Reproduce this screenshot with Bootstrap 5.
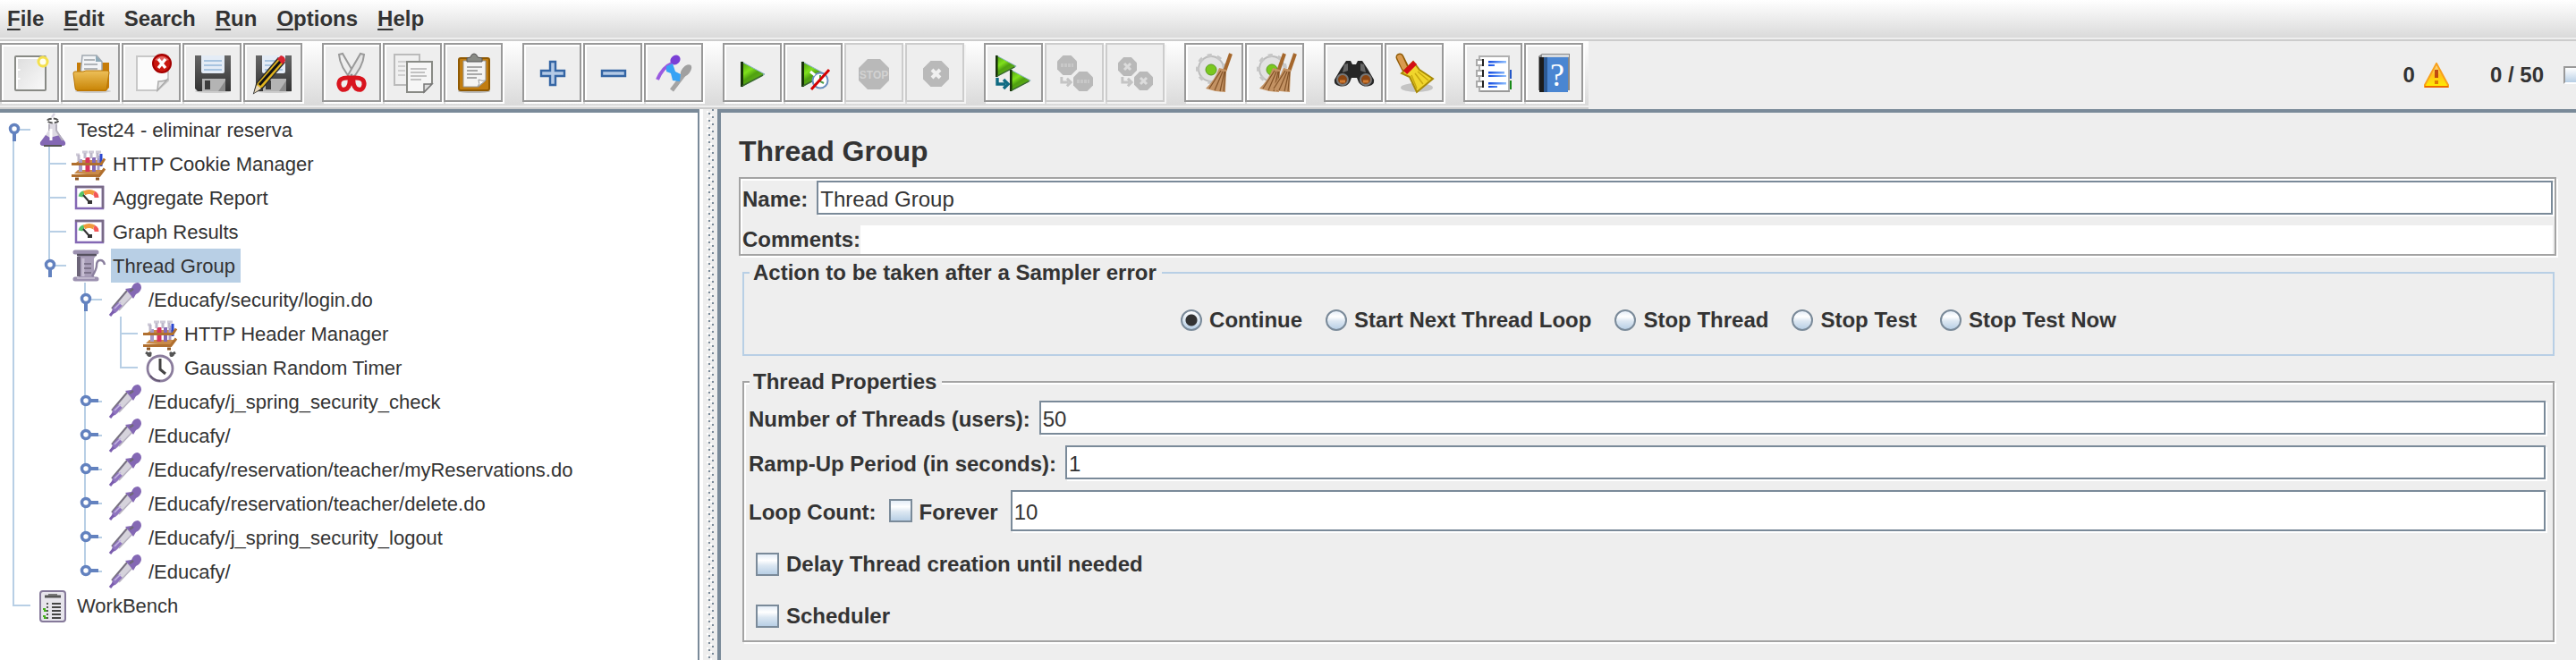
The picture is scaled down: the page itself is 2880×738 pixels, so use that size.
<!DOCTYPE html>
<html lang="en">
<head>
<meta charset="utf-8">
<meta name="viewport" content="width=device-width, initial-scale=1">
<title>Thread Group</title>
<link href="https://cdn.jsdelivr.net/npm/bootstrap@5.3.0/dist/css/bootstrap.min.css" rel="stylesheet">
<style>
  :root { --slate: #7a8a99; --line: #b8cfe5; --panel: #eeeeee; --ink: #333333; --etch: #a3a3a3; }
  body { background: var(--panel); color: var(--ink); font-family: "Liberation Sans", Arial, sans-serif; font-size: 24px; line-height: 30px; font-weight: 700; }
  .menu-strip { background: linear-gradient(#fff, #dadada 42px, #eee 42px); border-bottom: 2px solid #ccc; height: 46px; gap: 22px; padding: 0 8px 2px; }
  .menu-strip a { color: var(--ink); text-decoration: none; line-height: 42px; }
  .menu-strip u { text-decoration-thickness: 2px; text-underline-offset: 3px; }
  .tool-strip { background: linear-gradient(#fff, #dadada 72px, #eee 72px); border-bottom: 2px solid #ccc; height: 76px; padding: 2px 6px 0 0; gap: 22px; }
  .tool-set { gap: 2px; }
  .tool { width: 66px; height: 66px; padding: 0; border: 2px solid #999; border-radius: 0; background: var(--panel); box-shadow: inset 2px 2px #fff, 2px 2px #fff; }
  .tool:disabled { border-color: #ccc; box-shadow: 2px 2px #f4f4f4; }
  .tool svg { display: block; width: 62px; height: 62px; }
  .status { gap: 10px; }
  .threads { margin-left: 36px; }
  .lamp { width: 14px; height: 20px; margin-left: 12px; border: 2px solid #999; border-right: 0; border-bottom-color: #fff; background: linear-gradient(#fff, #b8cfe5); }
  .tree-pane { width: 782px; background: #fff; border-top: 4px solid var(--slate); border-right: 2px solid var(--slate); }
  .splitter { width: 20px; border-left: 4px solid #fff;
    background: linear-gradient(#fff 2px, transparent 2px) 4px 2px / 2px 8px repeat-y,
      linear-gradient(var(--slate) 2px, transparent 2px) 6px 4px / 2px 8px repeat-y,
      linear-gradient(#fff 2px, transparent 2px) 8px 6px / 2px 8px repeat-y,
      linear-gradient(var(--slate) 2px, transparent 2px) 10px 8px / 2px 8px repeat-y; }
  .main-pane { min-width: 0; border-top: 4px solid var(--slate); border-left: 4px solid var(--slate); padding: 23px 22px 20px 20px; }

  .tree, .tree ul { list-style: none; margin: 0; padding: 0; }
  .tree { font-size: 22px; font-weight: 400; }
  .tree ul { padding-left: 40px; }
  .tree li { background: linear-gradient(var(--line), var(--line)) 14px 0 / 2px 100% no-repeat; }
  .tree li:last-child { background-size: 2px 20px; }
  .tree > li:first-child { background-position: 14px 18px; }
  .node { height: 38px; background: linear-gradient(var(--line), var(--line)) 14px 18px / 20px 2px no-repeat; }
  .node svg { flex: none; width: 40px; height: 38px; }
  .node.leaf { padding-left: 40px; }
  .node span { margin-left: 4px; padding: 2px 6px 0 2px; line-height: 36px; white-space: nowrap; }
  .node .picked { background: var(--line); }

  .pane-title { font-size: 32px; line-height: 40px; font-weight: 700; margin-bottom: 9px; }
  .etched { border: 2px solid var(--etch); box-shadow: inset 2px 2px #fff, 2px 2px #fff; }
  .ident { padding: 2px 2px 0; }
  .line-row { gap: 10px; }
  .line-row label { padding-top: 4px; }
  .field { flex: 1 1 0; min-width: 0; height: 38px; padding: 4px 2px 0; border: 2px solid var(--slate); border-radius: 0; background: #fff; color: var(--ink); font-size: 24px; line-height: 30px; box-shadow: 2px 2px #fff; outline: 0; }
  .field.bare { height: 32px; border: 0; box-shadow: none; }
  .field.tall { height: 46px; }
  .boxed { margin: 0 2px 0 4px; padding: 0; border: 2px solid var(--line); }
  .boxed legend { float: none; width: auto; margin: 0 0 0 6px; padding: 0 6px 0 4px; font-size: 24px; line-height: 30px; background: var(--panel); }
  .boxed.etched { border-color: var(--etch); margin-top: 14px; }
  .choices { height: 76px; gap: 26px; }
  .choice { gap: 8px; }
  .choice input { appearance: none; flex: none; width: 26px; height: 26px; margin: 0; border: 2px solid var(--slate); background: linear-gradient(#e4edf7, #fff 30%, #dce7f2 55%, #b8cfe5); }
  .choice input[type=radio] { width: 24px; height: 24px; border-radius: 50%; }
  .choice input[type=radio]:checked { background: radial-gradient(circle, #333 6px, transparent 7px), linear-gradient(#fff, #b8cfe5); }
  .props { padding: 6px 8px 12px 5px; }
  .extras { gap: 28px; margin-top: 22px; }
</style>
</head>
<body class="d-flex flex-column min-vh-100">

<svg class="position-absolute" width="0" height="0" aria-hidden="true">
  <defs>
    <linearGradient id="gGreen" x1="0" y1="0" x2="0.6" y2="1"><stop offset="0" stop-color="#4a9a10"/><stop offset=".4" stop-color="#7fe01c"/><stop offset=".6" stop-color="#4fa010"/><stop offset="1" stop-color="#68b81c"/></linearGradient>
    <linearGradient id="gFolder" x1="0" y1="0" x2="0" y2="1"><stop offset="0" stop-color="#edc05a"/><stop offset="1" stop-color="#c98506"/></linearGradient>
    <linearGradient id="gPage" x1="0" y1="0" x2="1" y2="1"><stop offset="0" stop-color="#dcdcdc"/><stop offset="1" stop-color="#fafafa"/></linearGradient>
    <linearGradient id="gDisk" x1="0" y1="0" x2="0" y2="1"><stop offset="0" stop-color="#666"/><stop offset="1" stop-color="#333"/></linearGradient>
    <linearGradient id="gWarn" x1="0" y1="0" x2="0" y2="1"><stop offset="0" stop-color="#fbd9a0"/><stop offset=".5" stop-color="#ffc21a"/><stop offset="1" stop-color="#ffee00"/></linearGradient>
    <linearGradient id="gLine" x1="0" y1="0" x2="1" y2="0"><stop offset="0" stop-color="#1048e0"/><stop offset="1" stop-color="#8fc0ff"/></linearGradient>
  </defs>
  <symbol id="disk" viewBox="2 2 62 62">
    <ellipse cx="34" cy="54" rx="20" ry="2" fill="#ccc"/>
    <path d="M14 14h40v40H17l-3-3z" fill="url(#gDisk)"/><path d="M21 14h26v18q0 2-2 2H23q-2 0-2-2z" fill="#e4ecf6"/>
    <path d="M24 20h20M24 25h20M24 30h20" stroke="#a8c4e0" stroke-width="2"/>
    <path d="M22 40h26v14H22z" fill="#b4b4b4"/><path d="M25 42h6v10h-6z" fill="#3c3c3c"/><path d="M40 54l8-12v12z" fill="#8a8a8a"/>
  </symbol>
  <symbol id="play" viewBox="0 0 28 30"><path d="M1 1L27 15 1 29z" fill="url(#gGreen)" stroke="#86b0c8" stroke-width="1"/><path d="M1.500 1v28" stroke="#17320a" stroke-width="3"/><path d="M2 28L25 16" stroke="#3a6a2a" stroke-width="1.5"/></symbol>
  <symbol id="octo" viewBox="0 0 34 34"><path d="M10 0h14l10 10v14L24 34H10L0 24V10z" fill="#b9b9b9"/></symbol>
  <symbol id="gear" viewBox="2 2 62 62">
    <circle cx="30" cy="29" r="14" fill="#e2e2e2" stroke="#bcbcbc" stroke-width="2"/><circle cx="30" cy="29" r="15" fill="none" stroke="#c6c6c6" stroke-width="4" stroke-dasharray="5 6"/>
    <circle cx="30" cy="30" r="6" fill="#7ac81e" stroke="#5a9a20"/>
  </symbol>
  <symbol id="broom" viewBox="2 2 62 62">
    <path d="M52 12L45 32" stroke="#a5672c" stroke-width="4"/><path d="M39 28l8 2-1 25-11-1-11-3q10-9 15-23z" fill="#c39263"/>
    <path d="M41 31L28 51M43 32l-9 21M45 32l-5 22M46 32l-2 22" stroke="#835328" stroke-width="1.2" fill="none"/>
  </symbol>
  <symbol id="hook" viewBox="0 0 16 14"><path d="M2 0v7h9M9 2l5 5-5 5" fill="none" stroke="currentColor" stroke-width="3.4"/></symbol>

  <symbol id="open" viewBox="0 0 40 38"><path d="M16 18v14" stroke="#6382bf" stroke-width="4"/><circle cx="16" cy="18" r="4.5" fill="#fff" stroke="#6382bf" stroke-width="3.5"/></symbol>
  <symbol id="shut" viewBox="0 0 40 38"><path d="M20 18h10" stroke="#6382bf" stroke-width="4"/><circle cx="16" cy="18" r="4.5" fill="#fff" stroke="#6382bf" stroke-width="3.5"/></symbol>
  <symbol id="flask" viewBox="0 0 40 38">
    <path d="M14 12h10v8l8 13q1 3-2 3H8q-3 0-2-3l8-13z" fill="#dddae3"/><path d="M11 25l5 3 7-2 4-1 6 8q1 4-3 4H8q-4 0-3-4z" fill="#8468b4"/><path d="M9 37h20" stroke="#555" stroke-width="2"/>
    <path d="M15 13v7M23 13v7l7 11" fill="none" stroke="#b4b0bc" stroke-width="2"/><path d="M17 18v13" stroke="#fff" stroke-width="3"/>
    <ellipse cx="19" cy="9" rx="6" ry="2.400" fill="#fff" stroke="#555" stroke-width="2" stroke-dasharray="5 2"/><path d="M18 5l3-4" stroke="#d8d4e0" stroke-width="2.500"/>
  </symbol>
  <symbol id="rack" viewBox="0 0 40 38">
    <path d="M5 18L9 15h27l-4 4zM3 30l4-4h29l-5 6z" fill="#c98a48"/>
    <path d="M10 14v14" stroke="#a79ac6" stroke-width="4"/><path d="M18 12v16" stroke="#d6335c" stroke-width="5"/><path d="M25 12v16" stroke="#8468b4" stroke-width="4"/><path d="M30 10v16" stroke="#a79ac6" stroke-width="3"/><path d="M33 8v14" stroke="#2c48d0" stroke-width="3"/>
    <path d="M5 9h4M12 6h6M19 6h6M27 6h6" stroke="#cfcbd8" stroke-width="3"/><path d="M8 9v7M15 7v6M22 7v6M29 7v6" stroke="#bdb8ca" stroke-width="3"/>
    <path d="M0 19.500h33l4-6M0 32.500h31l6-8" fill="none" stroke="#b06f2e" stroke-width="3"/><path d="M4 36h4M27 36h4" stroke="#8e5520" stroke-width="3"/>
  </symbol>
  <symbol id="gauge" viewBox="0 0 40 38">
    <path d="M5 7h30v24H5z" fill="#fff" stroke="#8468b4" stroke-width="2.500"/><path d="M4 7h31v24" fill="none" stroke="#786a86" stroke-width="2.500"/>
    <path d="M10 18q1-4 4-4" fill="none" stroke="#54c468" stroke-width="5"/><path d="M14 14q6-3 11 0" fill="none" stroke="#f09a3c" stroke-width="5"/><path d="M25 14q3 1 3 5" fill="none" stroke="#f25757" stroke-width="5"/>
    <path d="M13 16l7 8" stroke="#333" stroke-width="2"/><path d="M18 24h5" stroke="#333" stroke-width="4"/>
  </symbol>
  <symbol id="spool" viewBox="0 0 40 38">
    <path d="M6 7h22l-3 4v20l3 3H6l2-3V10z" fill="#a89db8"/><path d="M8 9v22" stroke="#6c6478" stroke-width="4" fill="none"/><path d="M13 11v20" stroke="#c8bfd4" stroke-width="3"/>
    <path d="M14 17h8M14 22h8M14 27h8" stroke="#6f667c" stroke-width="1.600"/><path d="M4 4h24M4 34h24" stroke="#9c91b0" stroke-width="5" stroke-linecap="round"/><path d="M6 7h22" stroke="#55505e" stroke-width="2.400"/><path d="M6 33h20" stroke="#c8bfd4" stroke-width="1.600"/>
    <path d="M23 31q5-8 5-12 0-6 4-6t5 5" fill="none" stroke="#8a7f9e" stroke-width="2.400"/>
  </symbol>
  <symbol id="dropper" viewBox="0 0 40 38">
    <path d="M5 32l1-6L22 8l6 6-16 18-6 3z" fill="#d6d3dc"/><path d="M5 29L22 9" stroke="#77717f" stroke-width="2"/><path d="M5 35l1-7 6-6 5 4-8 8z" fill="#8f74bf"/><path d="M8 29l7-7" stroke="#c4b5e0" stroke-width="1.600"/>
    <path d="M28 15L13 31" stroke="#b5b0be" stroke-width="1.600"/><path d="M3 37l4-5" stroke="#7a5cad" stroke-width="3"/><path d="M20 7l7-1q2-6 7-6 4 1 4 6-1 5-6 7l-3 5-3-4z" fill="#8468b4"/><path d="M25 10l4-3" stroke="#6f6878" stroke-width="2.500"/>
  </symbol>
  <symbol id="clock" viewBox="0 0 40 38">
    <circle cx="19" cy="20" r="14" fill="#fff" stroke="#8a7c9c" stroke-width="2.800"/><path d="M3 2l6 4M36 2l-6 4M5 6l4-4M34 6l-4-4" stroke="#555" stroke-width="3"/>
    <path d="M19 9v12l6 5" fill="none" stroke="#444" stroke-width="3"/><path d="M8 28q4 5 11 6" fill="none" stroke="#62556f" stroke-width="2"/>
  </symbol>
  <symbol id="board" viewBox="0 0 40 38">
    <rect x="5" y="3" width="28" height="34" rx="3" fill="#e7e5ec" stroke="#85799a" stroke-width="2"/><path d="M10 9h18" stroke="#555" stroke-width="3"/><path d="M14 7h10" stroke="#777" stroke-width="2"/>
    <path d="M18 17h10M18 21h10M18 25h10M18 29h10M18 33h10" stroke="#444" stroke-width="2.200"/><path d="M12 17h2M12 21h2M12 25h2M12 29h2M12 33h2" stroke="#555" stroke-width="2"/><path d="M8 23h3M9 25h3M8 31h3M9 33h3" stroke="#45b01c" stroke-width="2"/>
  </symbol>
</svg>

<nav class="menu-strip d-flex align-items-start" aria-label="Menu">
  <a href="#"><u>F</u>ile</a><a href="#"><u>E</u>dit</a><a href="#">Search</a><a href="#"><u>R</u>un</a><a href="#"><u>O</u>ptions</a><a href="#"><u>H</u>elp</a>
</nav>

<header class="d-flex align-items-stretch">
  <div class="tool-strip d-flex" role="toolbar">
    <div class="tool-set d-flex">
      <button class="tool" type="button" aria-label="New"><svg viewBox="2 2 62 62"><rect x="17" y="15" width="34" height="38" rx="1" fill="url(#gPage)" stroke="#888a85" stroke-width="2"/><path d="M19 51V17h30" fill="none" stroke="#fff" stroke-width="2"/><path d="M21 29v2M21 39v2" stroke="#fff" stroke-width="3"/><circle cx="48" cy="21" r="6.500" fill="#f5f0c0"/><circle cx="48" cy="21" r="5" fill="#fffef0" stroke="#f4e04d" stroke-width="3"/></svg></button>
      <button class="tool" type="button" aria-label="Open"><svg viewBox="2 2 62 62"><ellipse cx="36" cy="54" rx="20" ry="2" fill="#ccc"/><path d="M18 22h36v28l-4 4H18z" fill="#c67c07"/><path d="M24 14h16l6 7v14H22z" fill="#f2f4f6" stroke="#a0a8b0" stroke-width="1.500"/><path d="M26 19h12M26 24h15M26 29h15" stroke="#b0b4b8" stroke-width="2"/><path d="M39 14v7h7z" fill="#8faab8"/><path d="M14 34q0-2 2-2h9l3-1h24q2 0 2 2l-3 20H18q-2 0-2-3z" fill="url(#gFolder)" stroke="#b87503" stroke-width="1"/></svg></button>
      <button class="tool" type="button" aria-label="Close"><svg viewBox="2 2 62 62"><path d="M17 15h35v27L40 53H17z" fill="#fbfbfb" stroke="#c8c8c8" stroke-width="2"/><path d="M40 53l1-10q8 0 11-3z" fill="#e8e8e8" stroke="#aaa" stroke-width="1.500"/><circle cx="45" cy="23" r="10" fill="#c9170e" stroke="#a40000" stroke-width="2"/><path d="M37 19q8-8 16 0l-8 2z" fill="#e88" opacity=".7"/><path d="M41 18l8 10M49 18l-8 10" stroke="#fff" stroke-width="3.400"/></svg></button>
      <button class="tool" type="button" aria-label="Save"><svg viewBox="2 2 62 62"><use href="#disk" x="2" y="2" width="62" height="62"/></svg></button>
      <button class="tool" type="button" aria-label="Save as"><svg viewBox="2 2 62 62"><use href="#disk" x="2" y="2" width="62" height="62"/><path d="M12 56l3-11L39 17l7 5-24 28z" fill="#e2b51e" stroke="#2b2b2b" stroke-width="1.500"/><path d="M18 47L42 20" stroke="#111" stroke-width="3"/><path d="M38 18l4-4q5 1 5 6l-3 4z" fill="#d8232f"/><path d="M12 56l3-9 5 4z" fill="#e8d8b8"/></svg></button>
    </div>
    <div class="tool-set d-flex">
      <button class="tool" type="button" aria-label="Cut"><svg viewBox="2 2 62 62"><path d="M19 13l4-1 14 24-3 6q-14-15-15-29z" fill="#eee" stroke="#999" stroke-width="2"/><path d="M47 13l-4-1-14 24 3 6q14-15 15-29z" fill="#e4e4e4" stroke="#999" stroke-width="2"/><circle cx="33" cy="36" r="1.500" fill="#888"/><path d="M31 39q-13-1-12 8 2 8 9 4 4-4 3-12zM35 39q13-1 12 8-2 8-9 4-4-4-3-12z" fill="#eee" stroke="#d9141e" stroke-width="5"/></svg></button>
      <button class="tool" type="button" aria-label="Copy"><svg viewBox="2 2 62 62"><path d="M13 13h28v34H13z" fill="#f0f0f0" stroke="#bbb" stroke-width="2"/><path d="M17 21h12M17 26h8M17 31h8M17 36h8" stroke="#d0d0d0" stroke-width="2"/><path d="M27 21h28v24l-9 10H27z" fill="#f6f6f6" stroke="#888a85" stroke-width="2"/><path d="M31 29h18M31 33h16M31 37h18M31 41h12" stroke="#c2c2c2" stroke-width="2"/><path d="M46 55v-9h9z" fill="#ddd" stroke="#777" stroke-width="1.500"/></svg></button>
      <button class="tool" type="button" aria-label="Paste"><svg viewBox="2 2 62 62"><ellipse cx="34" cy="54" rx="18" ry="2" fill="#bbb"/><rect x="17" y="17" width="34" height="36" rx="2" fill="#c17d11" stroke="#8f5902" stroke-width="2"/><path d="M22 20h25v22l-8 7H22z" fill="#f4f4f4" stroke="#999" stroke-width="1"/><path d="M26 27h17M26 31h12M26 35h17M26 39h11" stroke="#a8a8a8" stroke-width="2"/><path d="M38 49q3-3 1-8 4 2 8 1z" fill="#fff" stroke="#999"/><path d="M26 21v-4l4-1q1-4 4-4t4 4l5 1v4z" fill="#888a85" stroke="#555" stroke-width="1"/></svg></button>
    </div>
    <div class="tool-set d-flex">
      <button class="tool" type="button" aria-label="Expand all"><svg viewBox="2 2 62 62"><path d="M31 21h6v10h10v6H37v10h-6V37H21v-6h10z" fill="#b4cae6" stroke="#3465a4" stroke-width="2.400"/></svg></button>
      <button class="tool" type="button" aria-label="Collapse all"><svg viewBox="2 2 62 62"><path d="M21 31h26v6H21z" fill="#b4cae6" stroke="#3465a4" stroke-width="2.400"/></svg></button>
      <button class="tool" type="button" aria-label="Toggle"><svg viewBox="2 2 62 62"><path d="M15 41q6-14 16-18" stroke="#9a5ae0" stroke-width="4" fill="none"/><ellipse cx="35" cy="19" rx="6" ry="5" fill="#7a3fd6" transform="rotate(-40 35 19)"/><path d="M50 28L31 53" stroke="#a4a4a4" stroke-width="5"/><ellipse cx="47" cy="31" rx="8" ry="4.500" fill="#a0a0a0" transform="rotate(-50 47 31)"/><path d="M25 26l7-3 3 9 6 3-1 8-8-1-2-8-5-2z" fill="#36a3f5"/></svg></button>
    </div>
    <div class="tool-set d-flex">
      <button class="tool" type="button" aria-label="Start"><svg viewBox="2 2 62 62"><use href="#play" x="20" y="20" width="28" height="30"/></svg></button>
      <button class="tool" type="button" aria-label="Start no pauses"><svg viewBox="2 2 62 62"><use href="#play" x="20" y="20" width="28" height="30"/><circle cx="41" cy="42" r="8.500" fill="#fff" stroke="#6a8fc0" stroke-width="2"/><path d="M30 32l5 4" stroke="#fff" stroke-width="3"/><path d="M41 36v7l4 2" stroke="#4a9a4a" stroke-width="2" fill="none"/><path d="M51 30L31 52" stroke="#d40000" stroke-width="3"/></svg></button>
      <button class="tool" type="button" aria-label="Stop" disabled><svg viewBox="2 2 62 62"><use href="#octo" x="16" y="18" width="34" height="34"/><text x="33" y="40" text-anchor="middle" font-size="12" font-weight="700" fill="#d2d2d2">STOP</text></svg></button>
      <button class="tool" type="button" aria-label="Shutdown" disabled><svg viewBox="2 2 62 62"><use href="#octo" x="20" y="20" width="29" height="29"/><path d="M30 30l9 9M39 30l-9 9" stroke="#f0f0f0" stroke-width="4"/></svg></button>
    </div>
    <div class="tool-set d-flex">
      <button class="tool" type="button" aria-label="Remote start all"><svg viewBox="2 2 62 62"><use href="#play" x="13" y="13" width="24" height="26"/><use href="#play" x="29" y="29" width="24" height="26"/><use href="#hook" x="13" y="39" width="16" height="14" color="#0f6a82"/></svg></button>
      <button class="tool" type="button" aria-label="Remote stop all" disabled><svg viewBox="2 2 62 62"><use href="#octo" x="14" y="14" width="22" height="22"/><use href="#octo" x="32" y="32" width="22" height="22"/><path d="M18 25h14M36 43h14" stroke="#c8c8c8" stroke-width="4" stroke-dasharray="3 1"/><use href="#hook" x="17" y="38" width="14" height="12" color="#c4c4c4"/></svg></button>
      <button class="tool" type="button" aria-label="Remote shutdown all" disabled><svg viewBox="2 2 62 62"><use href="#octo" x="14" y="16" width="21" height="21"/><use href="#octo" x="32" y="32" width="21" height="21"/><path d="M21 23l7 7M28 23l-7 7M39 39l7 7M46 39l-7 7" stroke="#dcdcdc" stroke-width="3"/><use href="#hook" x="17" y="38" width="14" height="12" color="#c4c4c4"/></svg></button>
    </div>
    <div class="tool-set d-flex">
      <button class="tool" type="button" aria-label="Clear"><svg viewBox="2 2 62 62"><use href="#gear" x="2" y="2" width="62" height="62"/><use href="#broom" x="2" y="2" width="62" height="62"/></svg></button>
      <button class="tool" type="button" aria-label="Clear all"><svg viewBox="2 2 62 62"><use href="#gear" x="2" y="2" width="62" height="62"/><use href="#broom" x="-6" y="2" width="62" height="62"/><use href="#broom" x="6" y="2" width="62" height="62"/></svg></button>
    </div>
    <div class="tool-set d-flex">
      <button class="tool" type="button" aria-label="Search"><svg viewBox="2 2 62 62"><path d="M25 20h5l2 4h4l2-4h5l6 9 7 12q1 6-5 7-8 2-12-4l-2-5h-6l-2 5q-4 6-12 4-6-1-5-7l7-12z" fill="#262626"/><path d="M23 24l4-1v8l-6 2zM45 24l-4-1v8l6 2z" fill="#666"/><circle cx="21" cy="41" r="6" fill="#8a4512" stroke="#777" stroke-width="2"/><circle cx="47" cy="41" r="6" fill="#8a4512" stroke="#777" stroke-width="2"/><path d="M18 43h6M44 43h6" stroke="#d07a30" stroke-width="3"/></svg></button>
      <button class="tool" type="button" aria-label="Reset search"><svg viewBox="2 2 62 62"><ellipse cx="36" cy="50" rx="18" ry="5" fill="#c4c4c4"/><path d="M17 16l6 12" stroke="#8f5902" stroke-width="9" stroke-linecap="round"/><path d="M17 16l5 11" stroke="#d99a4e" stroke-width="6" stroke-linecap="round"/><path d="M19 34l13-13 7 9 15 10-18 15-8-17z" fill="#f0d62c" stroke="#a88a08" stroke-width="2"/><path d="M30 36l6 15M34 34l9 12M37 32l12 10" stroke="#c9a810" stroke-width="1.500"/><path d="M23 33l11-11" stroke="#d40f14" stroke-width="6"/></svg></button>
    </div>
    <div class="tool-set d-flex">
      <button class="tool" type="button" aria-label="Function helper"><svg viewBox="2 2 62 62"><path d="M50 30h4v10h-4z" fill="#2458c8"/><path d="M50 42h4v10h-4z" fill="#188a18"/><path d="M18 15h33v39H18z" fill="#fff" stroke="#b0b0b0" stroke-width="2"/><path d="M19 54h33" stroke="#999" stroke-width="2"/><path d="M28 20h20v2.500H28zM28 32h18v2.500H28zM28 44h20v2.500H28zM28 24h7v2h-7zM28 36h20v2H28zM28 48h10v2H28z" fill="url(#gLine)"/><path d="M15 19h7v6h-7zM15 31h7v6h-7zM15 43h7v6h-7z" fill="#fff" stroke="#aaa" stroke-width="2"/><path d="M22 18v8M22 30v8M22 42v8" stroke="#222" stroke-width="2"/></svg></button>
      <button class="tool" type="button" aria-label="Help"><svg viewBox="2 2 62 62"><path d="M16 15l4-3h31v41H16z" fill="#888"/><path d="M17 16h5v39h-5z" fill="#1c1c1c"/><path d="M22 16h27v39H22z" fill="#4a86d2"/><path d="M22 16h4v39h-4z" fill="#2d5a94"/><path d="M20 13h30v3H20z" fill="#d6dade"/><text x="37" y="48" text-anchor="middle" font-family="Liberation Serif, serif" font-weight="400" font-size="36" fill="#fff">?</text></svg></button>
    </div>
  </div>
  <div class="status d-flex align-items-center ms-auto">
    <span>0</span>
    <svg width="28" height="28" viewBox="0 0 28 28" role="img" aria-label="Warnings"><path d="M14 1l13 24v2H1v-2z" fill="url(#gWarn)" stroke="#f8a01c" stroke-width="2"/><path d="M1 27h26" stroke="#ec6a00" stroke-width="2"/><path d="M14 8v9" stroke="#c04a10" stroke-width="4"/><path d="M14 20v4" stroke="#e07800" stroke-width="4"/></svg>
    <span class="threads">0 / 50</span><span class="lamp"></span>
  </div>
</header>

<div class="d-flex flex-grow-1">
  <aside class="tree-pane flex-shrink-0">
    <ul class="tree">
      <li><div class="node d-flex"><svg><use href="#open"/></svg><svg><use href="#flask"/></svg><span>Test24 - eliminar reserva</span></div>
        <ul>
          <li><div class="node leaf d-flex"><svg><use href="#rack"/></svg><span>HTTP Cookie Manager</span></div></li>
          <li><div class="node leaf d-flex"><svg><use href="#gauge"/></svg><span>Aggregate Report</span></div></li>
          <li><div class="node leaf d-flex"><svg><use href="#gauge"/></svg><span>Graph Results</span></div></li>
          <li><div class="node d-flex"><svg><use href="#open"/></svg><svg><use href="#spool"/></svg><span class="picked">Thread Group</span></div>
            <ul>
              <li><div class="node d-flex"><svg><use href="#open"/></svg><svg><use href="#dropper"/></svg><span>/Educafy/security/login.do</span></div>
                <ul>
                  <li><div class="node leaf d-flex"><svg><use href="#rack"/></svg><span>HTTP Header Manager</span></div></li>
                  <li><div class="node leaf d-flex"><svg><use href="#clock"/></svg><span>Gaussian Random Timer</span></div></li>
                </ul>
              </li>
              <li><div class="node d-flex"><svg><use href="#shut"/></svg><svg><use href="#dropper"/></svg><span>/Educafy/j_spring_security_check</span></div></li>
              <li><div class="node d-flex"><svg><use href="#shut"/></svg><svg><use href="#dropper"/></svg><span>/Educafy/</span></div></li>
              <li><div class="node d-flex"><svg><use href="#shut"/></svg><svg><use href="#dropper"/></svg><span>/Educafy/reservation/teacher/myReservations.do</span></div></li>
              <li><div class="node d-flex"><svg><use href="#shut"/></svg><svg><use href="#dropper"/></svg><span>/Educafy/reservation/teacher/delete.do</span></div></li>
              <li><div class="node d-flex"><svg><use href="#shut"/></svg><svg><use href="#dropper"/></svg><span>/Educafy/j_spring_security_logout</span></div></li>
              <li><div class="node d-flex"><svg><use href="#shut"/></svg><svg><use href="#dropper"/></svg><span>/Educafy/</span></div></li>
            </ul>
          </li>
        </ul>
      </li>
      <li><div class="node leaf d-flex"><svg><use href="#board"/></svg><span>WorkBench</span></div></li>
    </ul>
  </aside>
  <div class="splitter flex-shrink-0"></div>
  <main class="main-pane flex-grow-1">
    <h1 class="pane-title">Thread Group</h1>
    <div class="ident etched mb-1">
      <div class="line-row d-flex align-items-center"><label for="name">Name:</label><input class="field" id="name" type="text" value="Thread Group"></div>
      <div class="d-flex align-items-center pt-2 mt-1"><label for="comments">Comments:</label><input class="field bare" id="comments" type="text"></div>
    </div>
    <fieldset class="boxed">
      <legend>Action to be taken after a Sampler error</legend>
      <div class="choices d-flex align-items-center justify-content-center">
        <label class="choice d-flex align-items-center"><input type="radio" name="onerror" checked>Continue</label>
        <label class="choice d-flex align-items-center"><input type="radio" name="onerror">Start Next Thread Loop</label>
        <label class="choice d-flex align-items-center"><input type="radio" name="onerror">Stop Thread</label>
        <label class="choice d-flex align-items-center"><input type="radio" name="onerror">Stop Test</label>
        <label class="choice d-flex align-items-center"><input type="radio" name="onerror">Stop Test Now</label>
      </div>
    </fieldset>
    <fieldset class="boxed etched">
      <legend>Thread Properties</legend>
      <div class="props d-flex flex-column">
        <div class="line-row d-flex align-items-center"><label for="threads">Number of Threads (users):</label><input class="field" id="threads" type="text" value="50"></div>
        <div class="line-row d-flex align-items-center pt-2 mt-1"><label for="ramp">Ramp-Up Period (in seconds):</label><input class="field" id="ramp" type="text" value="1"></div>
        <div class="line-row d-flex align-items-center pt-2 mt-1"><label for="loops">Loop Count:</label>
          <div class="choice d-flex align-items-center mx-1"><input id="forever" type="checkbox"><label for="forever">Forever</label></div>
          <input class="field tall" id="loops" type="text" value="10"></div>
        <div class="extras d-flex flex-column ms-2">
          <label class="choice d-flex align-items-center"><input type="checkbox">Delay Thread creation until needed</label>
          <label class="choice d-flex align-items-center"><input type="checkbox">Scheduler</label>
        </div>
      </div>
    </fieldset>
  </main>
</div>

<script src="https://cdn.jsdelivr.net/npm/bootstrap@5.3.0/dist/js/bootstrap.bundle.min.js"></script>
</body>
</html>
